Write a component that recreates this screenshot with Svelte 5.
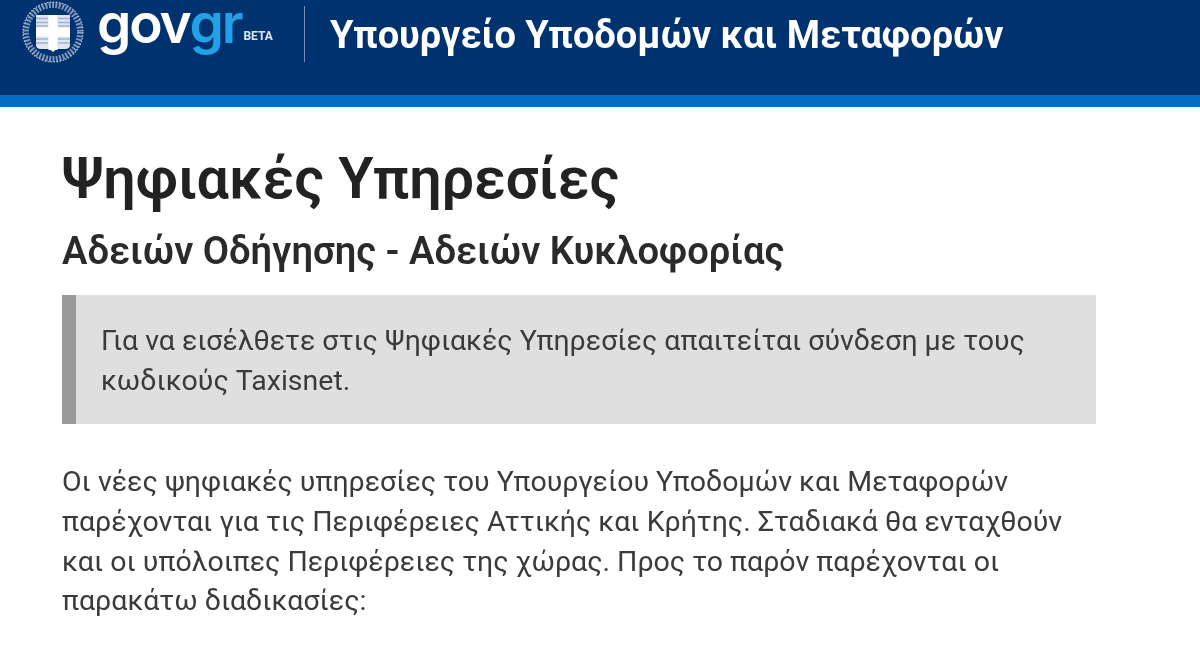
<script>
  const paragraph = 'Οι νέες ψηφιακές υπηρεσίες του Υπουργείου Υποδομών και Μεταφορών παρέχονται για τις Περιφέρειες Αττικής και Κρήτης. Σταδιακά θα ενταχθούν και οι υπόλοιπες Περιφέρειες της χώρας. Προς το παρόν παρέχονται οι παρακάτω διαδικασίες:';
</script>

<div class="page">
  <header class="header">
    <div class="brand">
      <svg class="emblem" viewBox="0 0 64 64" aria-hidden="true">
        <circle cx="32" cy="32" r="27" fill="none" stroke="#7d97b9" stroke-width="6" stroke-dasharray="2 1.4" />
        <circle cx="32" cy="32" r="30" fill="none" stroke="#b4c4d8" stroke-width="1.2" stroke-dasharray="1.5 1.5" />
        <path d="M15 15 H49 V45 Q49 49 44 49 H36 L32 52 L28 49 H20 Q15 49 15 45 Z" fill="#dfe6ef" />
        <path d="M15 18.5 H27 M37 18.5 H49 M15 22.5 H27 M37 22.5 H49 M15 26 H27 M37 26 H49 M15 39 H27 M37 39 H49 M15 43 H27 M37 43 H49" stroke="#a3b4ca" stroke-width="1.6" />
        <path d="M27.5 15 H36.5 V27.5 H49 V36.5 H36.5 V50 H27.5 V36.5 H15 V27.5 H27.5 Z" fill="#fff" />
      </svg>
      <div class="logo"><span class="gov">gov</span><span class="gr">gr</span><span class="beta">BETA</span></div>
    </div>
    <div class="divider"></div>
    <div class="ministry">Υπουργείο Υποδομών και Μεταφορών</div>
  </header>
  <div class="stripe"></div>
  <main class="content">
    <h1>Ψηφιακές Υπηρεσίες</h1>
    <h2>Αδειών Οδήγησης - Αδειών Κυκλοφορίας</h2>
    <div class="notice">Για να εισέλθετε στις Ψηφιακές Υπηρεσίες απαιτείται σύνδεση με τους κωδικούς Taxisnet.</div>
    <p>{paragraph}</p>
  </main>
</div>

<style>
  :global(body) {
    margin: 0;
    background: #fff;
    overflow: hidden;
  }
  .page {
    height: 645px;
    overflow: hidden;
    font-family: Roboto, "Noto Sans", sans-serif;
    color: #2e2e2e;
    filter: blur(0.5px);
  }
  .header {
    height: 95px;
    box-sizing: border-box;
    background: #013270;
    display: flex;
    align-items: flex-start;
    padding: 0 0 0 21px;
    color: #fff;
  }
  .brand {
    display: flex;
    align-items: flex-start;
    width: 283px;
    flex: none;
  }
  .emblem {
    width: 64px;
    height: 64px;
    flex: none;
  }
  .logo {
    display: flex;
    align-items: baseline;
    margin-left: 12px;
    font-family: Inter, "Open Sans", sans-serif;
    font-weight: 600;
    font-size: 55px;
    line-height: 46px;
    letter-spacing: -2.2px;
  }
  .gov { color: #fff; }
  .gr { color: #1fa3e6; }
  .beta {
    font-family: Roboto, sans-serif;
    font-weight: 700;
    font-size: 12px;
    letter-spacing: 0;
    margin-left: 2px;
    color: #dfe8f2;
    position: relative;
    top: -3px;
  }
  .divider {
    width: 1px;
    height: 56px;
    margin-top: 6px;
    background: #6f8fb4;
    flex: none;
  }
  .ministry {
    margin-left: 25px;
    margin-top: 13px;
    font-size: 38px;
    line-height: 44px;
    font-weight: 700;
    white-space: nowrap;
  }
  .stripe {
    height: 12px;
    background: #046ec5;
  }
  .content {
    padding: 0 104px 0 62px;
  }
  h1 {
    margin: 37px 0 0;
    font-size: 57.4px;
    line-height: 70px;
    font-weight: 600;
    color: #222;
    white-space: nowrap;
  }
  h2 {
    margin: 15px 0 0;
    font-size: 38.15px;
    line-height: 44px;
    font-weight: 600;
    color: #2a2a2a;
    white-space: nowrap;
  }
  .notice {
    margin-top: 22px;
    box-sizing: border-box;
    height: 129px;
    background: #dfdfdf;
    border-left: 14px solid #9a9a9a;
    padding: 26px 40px 0 25px;
    font-size: 28.5px;
    line-height: 40px;
    color: #3a3a3a;
  }
  p {
    margin: 38px 0 0;
    max-width: 1015px;
    font-size: 28.5px;
    line-height: 39.8px;
    color: #3a3a3a;
  }
</style>
